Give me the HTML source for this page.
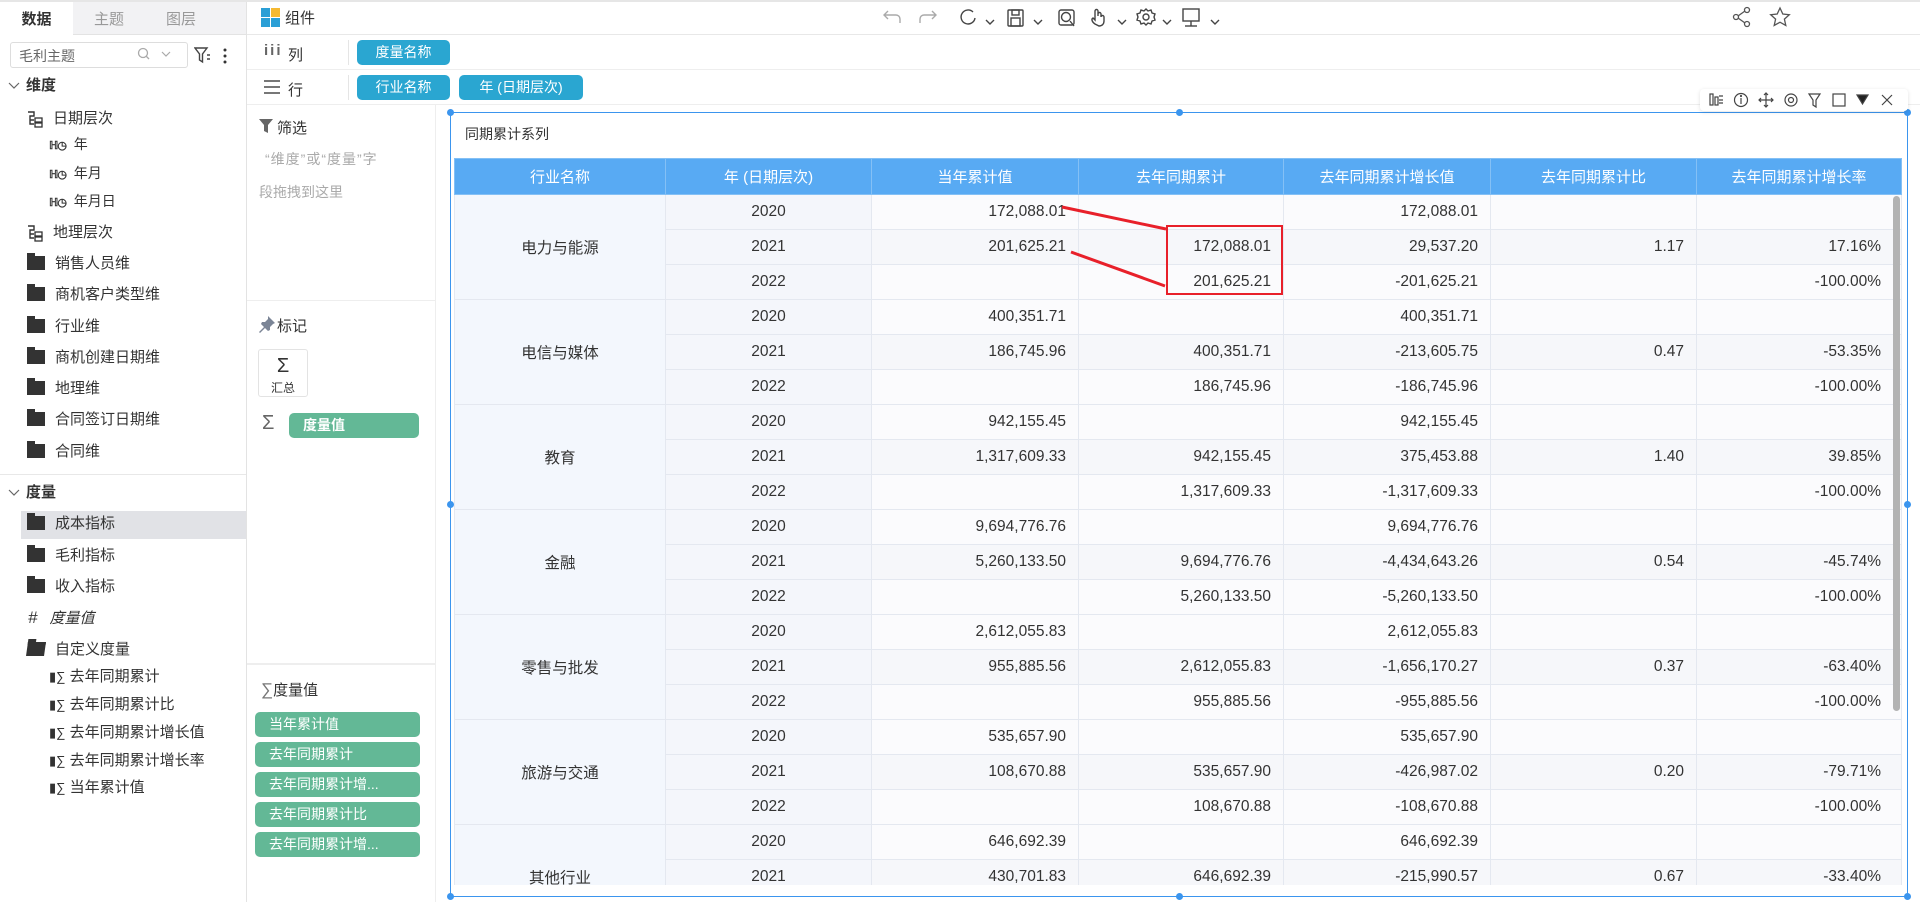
<!DOCTYPE html>
<html><head><meta charset="utf-8">
<style>
*{box-sizing:border-box;margin:0;padding:0}
body{width:1920px;height:902px;overflow:hidden;background:#fff;font-family:"Liberation Sans","Noto Sans CJK SC",sans-serif;color:#333;position:relative;font-size:14px}
.a{position:absolute}
.it{position:absolute;left:0;font-size:15px;color:#333;white-space:nowrap;line-height:20px}
.fold{display:inline-block;width:18px;height:14px;background:#333;vertical-align:-2px;margin-right:10px;border-top:3px solid #333;position:relative}
.fold:before{content:"";position:absolute;left:0;top:-6px;width:8px;height:4px;background:#333}
.pill{position:absolute;background:#2aa6d1;color:#fff;border-radius:5px;font-size:14px;line-height:25px;height:25px;text-align:center}
.gp{position:absolute;left:255px;width:165px;height:25px;background:#63b896;color:#fff;border-radius:5px;font-size:14px;line-height:25px;padding-left:14px}
table{border-collapse:collapse;table-layout:fixed;font-size:15.5px}
td{height:35px;border:1px solid #e4e8f0;padding:0 12px;text-align:right;color:#333;white-space:nowrap}
th{height:36px;background:#58aaf3;color:#fff;font-weight:normal;border:1px solid #84c0f5;font-size:15px}
td.g{text-align:center;background:#f3f7fd}
td.y{text-align:center;background:#f4f6fb}
tr.o td{background:#fbfbfd}
tr.e td{background:#f6f7fa}
tr td.g{background:#f3f7fd}
tr td.y{background:#f4f6fb}
.dot{position:absolute;width:7px;height:7px;border-radius:50%;background:#3b95ee}
</style></head><body>

<!-- LEFT PANEL -->
<div class="a" style="left:0;top:0;width:247px;height:902px;border-right:1px solid #e3e3e3"></div>
<div class="a" style="left:0;top:0;width:247px;height:2px;background:#e6e6e6"></div>
<div class="a" style="left:73px;top:2px;width:173px;height:33px;background:#f2f2f4;border-bottom:1px solid #e3e3e3"></div>
<div class="a" style="left:0;top:8px;width:73px;text-align:center;font-size:15px;font-weight:bold;color:#333">数据</div>
<div class="a" style="left:73px;top:8px;width:72px;text-align:center;font-size:15px;color:#999">主题</div>
<div class="a" style="left:145px;top:8px;width:72px;text-align:center;font-size:15px;color:#999">图层</div>
<div class="a" style="left:10px;top:42px;width:178px;height:26px;border:1px solid #ddd;border-radius:3px;font-size:14px;color:#666;padding:3px 0 0 8px">毛利主题</div>
<svg class="a" style="left:136px;top:47px" width="40" height="16"><circle cx="7" cy="6" r="4.5" fill="none" stroke="#aaa" stroke-width="1.3"/><line x1="10" y1="9" x2="13" y2="12" stroke="#aaa" stroke-width="1.3"/><polyline points="26,5 30,9 34,5" fill="none" stroke="#aaa" stroke-width="1.2"/></svg>
<svg class="a" style="left:194px;top:46px" width="40" height="20"><path d="M1 2h12l-4.5 6v8l-3-2V8z" fill="none" stroke="#444" stroke-width="1.4"/><line x1="13" y1="9" x2="16" y2="9" stroke="#444" stroke-width="1.5"/><line x1="13" y1="13" x2="16" y2="13" stroke="#444" stroke-width="1.5"/><circle cx="31" cy="4" r="1.5" fill="#333"/><circle cx="31" cy="10" r="1.5" fill="#333"/><circle cx="31" cy="16" r="1.5" fill="#333"/></svg>

<svg class="a" style="left:8px;top:81px" width="12" height="10"><polyline points="1,2 6,7 11,2" fill="none" stroke="#666" stroke-width="1.2"/></svg>
<div class="it" style="left:26px;top:76px;font-weight:bold">维度</div>
<svg class="a" style="left:26px;top:111px" width="18" height="18"><path d="M2 1h6v4H4v8h4M4 9h4" fill="none" stroke="#333" stroke-width="1.4"/><rect x="9" y="7" width="7" height="4" fill="none" stroke="#333" stroke-width="1.3"/><rect x="9" y="12" width="7" height="4" fill="none" stroke="#333" stroke-width="1.3"/></svg>
<div class="it" style="left:53px;top:109px">日期层次</div>
<div class="it" style="left:49px;top:134px;font-size:14px"><b style="font-size:11px;letter-spacing:-1px">ℍ◷</b>&nbsp; 年</div>
<div class="it" style="left:49px;top:163px;font-size:14px"><b style="font-size:11px;letter-spacing:-1px">ℍ◷</b>&nbsp; 年月</div>
<div class="it" style="left:49px;top:191px;font-size:14px"><b style="font-size:11px;letter-spacing:-1px">ℍ◷</b>&nbsp; 年月日</div>
<svg class="a" style="left:26px;top:225px" width="18" height="18"><path d="M2 1h6v4H4v8h4M4 9h4" fill="none" stroke="#333" stroke-width="1.4"/><rect x="9" y="7" width="7" height="4" fill="none" stroke="#333" stroke-width="1.3"/><rect x="9" y="12" width="7" height="4" fill="none" stroke="#333" stroke-width="1.3"/></svg>
<div class="it" style="left:53px;top:223px">地理层次</div>
<div class="it" style="left:27px;top:254px"><i class="fold"></i>销售人员维</div>
<div class="it" style="left:27px;top:285px"><i class="fold"></i>商机客户类型维</div>
<div class="it" style="left:27px;top:317px"><i class="fold"></i>行业维</div>
<div class="it" style="left:27px;top:348px"><i class="fold"></i>商机创建日期维</div>
<div class="it" style="left:27px;top:379px"><i class="fold"></i>地理维</div>
<div class="it" style="left:27px;top:410px"><i class="fold"></i>合同签订日期维</div>
<div class="it" style="left:27px;top:442px"><i class="fold"></i>合同维</div>
<div class="a" style="left:0;top:474px;width:246px;height:1px;background:#e8e8e8"></div>
<svg class="a" style="left:8px;top:488px" width="12" height="10"><polyline points="1,2 6,7 11,2" fill="none" stroke="#666" stroke-width="1.2"/></svg>
<div class="it" style="left:26px;top:483px;font-weight:bold">度量</div>
<div class="a" style="left:21px;top:511px;width:225px;height:28px;background:#e1e2e6"></div>
<div class="it" style="left:27px;top:514px"><i class="fold"></i>成本指标</div>
<div class="it" style="left:27px;top:546px"><i class="fold"></i>毛利指标</div>
<div class="it" style="left:27px;top:577px"><i class="fold"></i>收入指标</div>
<div class="it" style="left:28px;top:608px"><i style="font-size:17px;margin-right:12px">#</i><i>度量值</i></div>
<div class="it" style="left:27px;top:640px"><i class="fold" style="transform:skewX(-8deg)"></i>自定义度量</div>
<div class="it" style="left:49px;top:667px"><span style="font-size:13px">▮∑</span> 去年同期累计</div>
<div class="it" style="left:49px;top:695px"><span style="font-size:13px">▮∑</span> 去年同期累计比</div>
<div class="it" style="left:49px;top:723px"><span style="font-size:13px">▮∑</span> 去年同期累计增长值</div>
<div class="it" style="left:49px;top:751px"><span style="font-size:13px">▮∑</span> 去年同期累计增长率</div>
<div class="it" style="left:49px;top:778px"><span style="font-size:13px">▮∑</span> 当年累计值</div>

<!-- TOP TOOLBAR -->
<div class="a" style="left:247px;top:0;width:1673px;height:2px;background:#e6e6e6"></div>
<div class="a" style="left:247px;top:34px;width:1673px;height:1px;background:#e8e8e8"></div>
<svg class="a" style="left:261px;top:8px" width="19" height="19"><rect x="0" y="0" width="9" height="9" fill="#2a9fd6"/><rect x="10" y="0" width="9" height="9" fill="#f5b932"/><rect x="0" y="10" width="9" height="9" fill="#2a9fd6"/><rect x="10" y="10" width="9" height="9" fill="#2a9fd6"/></svg>
<div class="a" style="left:285px;top:7px;font-size:15px">组件</div>
<svg class="a" style="left:880px;top:5px" width="360" height="26" fill="none" stroke="#444" stroke-width="1.4">
<path d="M20 18v-4a4 4 0 0 0-4-4H4M8 6l-4 4 4 4" stroke="#aaa"/>
<path d="M40 18v-4a4 4 0 0 1 4-4h12M52 6l4 4-4 4" stroke="#aaa"/>
<path d="M93 7a7 7 0 1 0 2 6"/>
<polyline points="106,15 110,19 114,15"/>
<rect x="128" y="5" width="15" height="16" rx="1"/><rect x="132" y="5" width="7" height="5"/><rect x="131" y="13" width="9" height="8"/>
<polyline points="154,15 158,19 162,15"/>
<rect x="179" y="5" width="15" height="15" rx="2"/><circle cx="186" cy="12" r="4.5"/><line x1="190" y1="16" x2="194" y2="21"/>
<path d="M215 19c-3-2-4-5-2-6l2 2V6a1.5 1.5 0 0 1 3 0v5h0V9a1.5 1.5 0 0 1 3 0v3a1.5 1.5 0 0 1 3 0v4c0 3-2 5-5 5z"/>
<polyline points="238,15 242,19 246,15"/>
<circle cx="266" cy="12" r="3"/><path d="M266 4l2 2 3-1 1 3 3 1-1 3 1 3-3 1-1 3-3-1-2 2-2-2-3 1-1-3-3-1 1-3-1-3 3-1 1-3 3 1z"/>
<polyline points="283,15 287,19 291,15"/>
<rect x="303" y="4" width="16" height="12"/><line x1="311" y1="16" x2="311" y2="21"/><line x1="305" y1="21" x2="317" y2="21"/>
<polyline points="331,15 335,19 339,15"/>
</svg>
<svg class="a" style="left:1732px;top:6px" width="62" height="22" fill="none" stroke="#555" stroke-width="1.3">
<circle cx="4" cy="11" r="2.5"/><circle cx="15" cy="4" r="2.5"/><circle cx="15" cy="18" r="2.5"/><line x1="6" y1="10" x2="13" y2="5"/><line x1="6" y1="12" x2="13" y2="17"/>
<path d="M48 2l2.8 6 6.5.7-4.9 4.4 1.4 6.4L48 16.2l-5.8 3.3 1.4-6.4-4.9-4.4 6.5-.7z"/>
</svg>

<!-- SHELVES -->
<div class="a" style="left:247px;top:69px;width:1673px;height:1px;background:#eee"></div>
<div class="a" style="left:247px;top:104px;width:1673px;height:1px;background:#eee"></div>
<div class="a" style="left:348px;top:40px;width:1px;height:25px;background:#e5e5e5"></div>
<div class="a" style="left:348px;top:75px;width:1px;height:25px;background:#e5e5e5"></div>
<div class="a" style="left:264px;top:42px;font-size:15px;color:#666;letter-spacing:2px;font-weight:bold">iii</div>
<div class="a" style="left:288px;top:44px;font-size:15px">列</div>
<svg class="a" style="left:264px;top:79px" width="16" height="16" stroke="#777" stroke-width="2"><line x1="0" y1="2" x2="16" y2="2"/><line x1="0" y1="8" x2="16" y2="8"/><line x1="0" y1="14" x2="16" y2="14"/></svg>
<div class="a" style="left:288px;top:79px;font-size:15px">行</div>
<div class="pill" style="left:357px;top:40px;width:93px">度量名称</div>
<div class="pill" style="left:357px;top:75px;width:93px">行业名称</div>
<div class="pill" style="left:459px;top:75px;width:124px">年 (日期层次)</div>

<!-- MIDDLE PANEL -->
<div class="a" style="left:435px;top:104px;width:1px;height:798px;background:#eee"></div>
<svg class="a" style="left:259px;top:119px" width="14" height="14"><path d="M0 0h14l-5 6v8l-4-2V6z" fill="#666"/></svg>
<div class="a" style="left:277px;top:117px;font-size:15px">筛选</div>
<div class="a" style="left:265px;top:149px;font-size:14px;color:#aaa;letter-spacing:1px">“维度”或“度量”字</div>
<div class="a" style="left:259px;top:182px;font-size:14px;color:#aaa">段拖拽到这里</div>
<div class="a" style="left:247px;top:300px;width:188px;height:1px;background:#eee"></div>
<svg class="a" style="left:258px;top:315px" width="18" height="18"><path d="M10 1l7 7-2 1-3 3 0 3-2 1-3-3-5 5-1-1 5-5-3-3 1-2 3 0 3-3z" fill="#7b8596"/></svg>
<div class="a" style="left:277px;top:315px;font-size:15px;color:#333">标记</div>
<div class="a" style="left:258px;top:349px;width:50px;height:48px;border:1px solid #e3e3e3;border-radius:3px;text-align:center"><div style="font-size:20px;line-height:26px;margin-top:3px">Σ</div><div style="font-size:12px">汇总</div></div>
<div class="a" style="left:262px;top:412px;font-size:20px;color:#666">Σ</div>
<div class="gp" style="left:289px;top:413px;width:130px;font-weight:bold;padding-left:14px">度量值</div>
<div class="a" style="left:247px;top:663px;width:188px;height:2px;background:#eee"></div>
<div class="a" style="left:261px;top:679px;font-size:15px"><span style="color:#777;font-size:17px">∑</span>度量值</div>
<div class="gp" style="top:712px">当年累计值</div>
<div class="gp" style="top:742px">去年同期累计</div>
<div class="gp" style="top:772px">去年同期累计增...</div>
<div class="gp" style="top:802px">去年同期累计比</div>
<div class="gp" style="top:832px">去年同期累计增...</div>

<!-- CHART CONTAINER -->
<div class="a" style="left:450px;top:112px;width:1458px;height:785px;border:1px solid #3b95ee"></div>
<div class="dot" style="left:447px;top:109px"></div><div class="dot" style="left:1176px;top:109px"></div><div class="dot" style="left:1904px;top:109px"></div>
<div class="dot" style="left:447px;top:501px"></div><div class="dot" style="left:1904px;top:501px"></div>
<div class="dot" style="left:447px;top:893px"></div><div class="dot" style="left:1176px;top:893px"></div><div class="dot" style="left:1904px;top:893px"></div>
<div class="a" style="left:1700px;top:89px;width:208px;height:22px;background:#fff;border-radius:4px;box-shadow:0 1px 4px rgba(0,0,0,.12)"></div>
<svg class="a" style="left:1707px;top:91px" width="200" height="18" fill="none" stroke="#444" stroke-width="1.2">
<rect x="3" y="3" width="3" height="11"/><rect x="8" y="6" width="3" height="8"/><path d="M12 5h4M12 9h4M12 12h4"/>
<circle cx="34" cy="9" r="6.5"/><line x1="34" y1="7" x2="34" y2="13"/><circle cx="34" cy="5" r=".5"/>
<path d="M59 2v14M52 9h14M57 4l2-2 2 2M57 14l2 2 2-2M54 7l-2 2 2 2M64 7l2 2-2 2"/>
<circle cx="84" cy="9" r="2.5"/><circle cx="84" cy="9" r="6"/>
<path d="M102 3h11l-4 6v7l-3-2V9z"/>
<rect x="126" y="3" width="12" height="12"/>
<path d="M150 4h11l-5.5 9z" fill="#222"/>
<path d="M175 4l10 10M185 4l-10 10"/>
</svg>
<div class="a" style="left:465px;top:124px;font-size:14px">同期累计系列</div>

<div class="a" style="left:454px;top:158px;width:1448px;height:727px;overflow:hidden">
<table style="width:1447px">
<colgroup><col style="width:211px"><col style="width:206px"><col style="width:207px"><col style="width:205px"><col style="width:207px"><col style="width:206px"><col style="width:205px"></colgroup>
<tr><th>行业名称</th><th>年 (日期层次)</th><th>当年累计值</th><th>去年同期累计</th><th>去年同期累计增长值</th><th>去年同期累计比</th><th>去年同期累计增长率</th></tr>
<tr class="o"><td class="g" rowspan="3">电力与能源</td><td class="y">2020</td><td>172,088.01</td><td></td><td>172,088.01</td><td></td><td></td></tr>
<tr class="e"><td class="y">2021</td><td>201,625.21</td><td>172,088.01</td><td>29,537.20</td><td>1.17</td><td style="padding-right:20px">17.16%</td></tr>
<tr class="o"><td class="y">2022</td><td></td><td>201,625.21</td><td>-201,625.21</td><td></td><td style="padding-right:20px">-100.00%</td></tr>
<tr class="o"><td class="g" rowspan="3">电信与媒体</td><td class="y">2020</td><td>400,351.71</td><td></td><td>400,351.71</td><td></td><td></td></tr>
<tr class="e"><td class="y">2021</td><td>186,745.96</td><td>400,351.71</td><td>-213,605.75</td><td>0.47</td><td style="padding-right:20px">-53.35%</td></tr>
<tr class="o"><td class="y">2022</td><td></td><td>186,745.96</td><td>-186,745.96</td><td></td><td style="padding-right:20px">-100.00%</td></tr>
<tr class="o"><td class="g" rowspan="3">教育</td><td class="y">2020</td><td>942,155.45</td><td></td><td>942,155.45</td><td></td><td></td></tr>
<tr class="e"><td class="y">2021</td><td>1,317,609.33</td><td>942,155.45</td><td>375,453.88</td><td>1.40</td><td style="padding-right:20px">39.85%</td></tr>
<tr class="o"><td class="y">2022</td><td></td><td>1,317,609.33</td><td>-1,317,609.33</td><td></td><td style="padding-right:20px">-100.00%</td></tr>
<tr class="o"><td class="g" rowspan="3">金融</td><td class="y">2020</td><td>9,694,776.76</td><td></td><td>9,694,776.76</td><td></td><td></td></tr>
<tr class="e"><td class="y">2021</td><td>5,260,133.50</td><td>9,694,776.76</td><td>-4,434,643.26</td><td>0.54</td><td style="padding-right:20px">-45.74%</td></tr>
<tr class="o"><td class="y">2022</td><td></td><td>5,260,133.50</td><td>-5,260,133.50</td><td></td><td style="padding-right:20px">-100.00%</td></tr>
<tr class="o"><td class="g" rowspan="3">零售与批发</td><td class="y">2020</td><td>2,612,055.83</td><td></td><td>2,612,055.83</td><td></td><td></td></tr>
<tr class="e"><td class="y">2021</td><td>955,885.56</td><td>2,612,055.83</td><td>-1,656,170.27</td><td>0.37</td><td style="padding-right:20px">-63.40%</td></tr>
<tr class="o"><td class="y">2022</td><td></td><td>955,885.56</td><td>-955,885.56</td><td></td><td style="padding-right:20px">-100.00%</td></tr>
<tr class="o"><td class="g" rowspan="3">旅游与交通</td><td class="y">2020</td><td>535,657.90</td><td></td><td>535,657.90</td><td></td><td></td></tr>
<tr class="e"><td class="y">2021</td><td>108,670.88</td><td>535,657.90</td><td>-426,987.02</td><td>0.20</td><td style="padding-right:20px">-79.71%</td></tr>
<tr class="o"><td class="y">2022</td><td></td><td>108,670.88</td><td>-108,670.88</td><td></td><td style="padding-right:20px">-100.00%</td></tr>
<tr class="o"><td class="g" rowspan="3">其他行业</td><td class="y">2020</td><td>646,692.39</td><td></td><td>646,692.39</td><td></td><td></td></tr>
<tr class="e"><td class="y">2021</td><td>430,701.83</td><td>646,692.39</td><td>-215,990.57</td><td>0.67</td><td style="padding-right:20px">-33.40%</td></tr>
<tr class="o"><td class="y">2022</td><td></td><td>430,701.83</td><td>-430,701.83</td><td></td><td style="padding-right:20px">-100.00%</td></tr>
</table>
</div>
<div class="a" style="left:1893px;top:196px;width:7px;height:515px;background:#b3b3b3;border-radius:4px"></div>

<!-- red annotations -->
<div class="a" style="left:1166px;top:225px;width:117px;height:70px;border:2px solid #e8202a"></div>
<svg class="a" style="left:0;top:0" width="1920" height="902"><line x1="1062" y1="207" x2="1166" y2="229" stroke="#e8202a" stroke-width="3"/><line x1="1071" y1="252" x2="1165" y2="286" stroke="#e8202a" stroke-width="3"/></svg>
</body></html>
